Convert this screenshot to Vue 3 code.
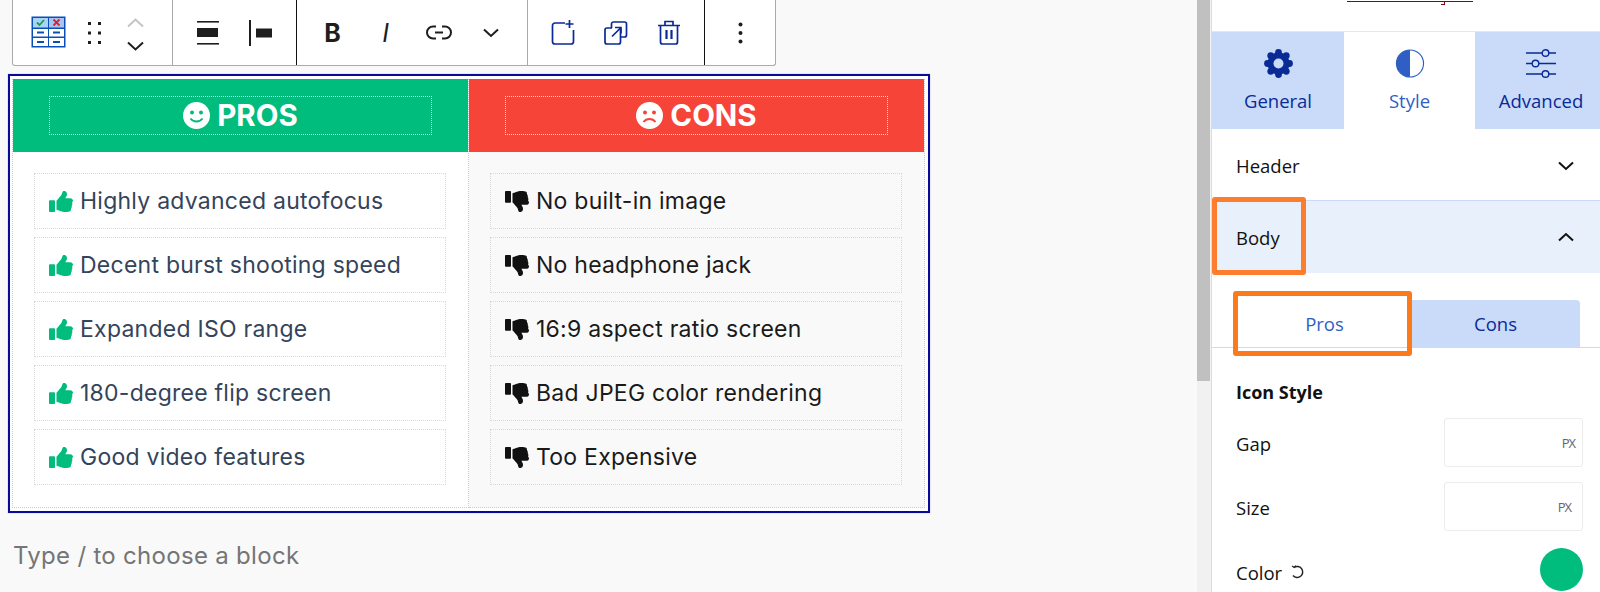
<script setup>
const thumb = "M104 224H24c-13.255 0-24 10.745-24 24v240c0 13.255 10.745 24 24 24h80c13.255 0 24-10.745 24-24V248c0-13.255-10.745-24-24-24zM384 81.452c0 42.416-25.97 66.208-33.277 94.548h101.723c33.397 0 59.397 27.746 59.553 58.098.084 17.938-7.546 37.249-19.439 49.197l-.11.11c9.836 23.337 8.237 56.037-9.308 79.469 8.681 25.895-.069 57.704-16.382 74.757 4.298 17.598 2.244 32.575-6.148 44.632C440.202 511.587 389.616 512 346.839 512l-2.845-.001c-48.287-.017-87.806-17.598-119.56-31.725-15.957-7.099-36.821-15.887-52.651-16.178-6.54-.12-11.783-5.457-11.783-11.998v-213.77c0-3.2 1.282-6.271 3.558-8.521 39.614-39.144 56.648-80.587 89.117-113.111 14.804-14.832 20.188-37.236 25.393-58.902C282.515 39.293 291.817 0 312 0c24 0 72 8 72 81.452z"
const pros = ['Highly advanced autofocus', 'Decent burst shooting speed', 'Expanded ISO range', '180-degree flip screen', 'Good video features']
const cons = ['No built-in image', 'No headphone jack', '16:9 aspect ratio screen', 'Bad JPEG color rendering', 'Too Expensive']
const gearBumps = [0, 45, 90, 135, 180, 225, 270, 315].map((a) => ({
  a,
  x: 14.5 + 11 * Math.cos((a - 90) * Math.PI / 180),
  y: 14.5 + 11 * Math.sin((a - 90) * Math.PI / 180),
}))
</script>

<template>
  <div class="page">
    <main class="editor">
      <div class="toolbar">
        <div class="group g1">
          <svg class="logo" width="35" height="32" viewBox="0 0 35 32">
            <rect x="0.5" y="0.5" width="34" height="31" fill="#0a4fb5" />
            <rect x="2" y="2" width="15" height="9.5" fill="#a9d3f7" />
            <rect x="18" y="2" width="15" height="9.5" fill="#a9c4f0" />
            <rect x="2" y="13" width="15" height="7.5" fill="#fff" />
            <rect x="18" y="13" width="15" height="7.5" fill="#fff" />
            <rect x="2" y="22" width="15" height="8" fill="#fff" />
            <rect x="18" y="22" width="15" height="8" fill="#fff" />
            <path d="M6 6.500l2.500 2.500 4.500-5" fill="none" stroke="#1c9a55" stroke-width="1.800" />
            <path d="M22.500 3.500l6 6M28.500 3.500l-6 6" fill="none" stroke="#e0202c" stroke-width="1.800" />
            <path d="M6 16.500h7M22 16.500h7M6 26h7M22 26h7" stroke="#0a4fb5" stroke-width="2" />
          </svg>
          <svg class="drag" width="13" height="22" viewBox="0 0 13 22" fill="#1e1e1e">
            <rect x="0" y="0" width="3" height="3" /><rect x="10" y="0" width="3" height="3" />
            <rect x="0" y="9.500" width="3" height="3" /><rect x="10" y="9.500" width="3" height="3" />
            <rect x="0" y="19" width="3" height="3" /><rect x="10" y="19" width="3" height="3" />
          </svg>
          <svg class="mover" width="17" height="33" viewBox="0 0 17 33" fill="none" stroke-width="2">
            <path d="M1 8.500l7.500-7 7.500 7" stroke="#c4c4c4" />
            <path d="M1 24.500l7.500 7 7.500-7" stroke="#1e1e1e" />
          </svg>
        </div>
        <div class="group g2">
          <div class="cell">
            <svg width="22" height="26" viewBox="0 0 22 26" fill="#1e1e1e">
              <rect y="1" width="22" height="1.600" /><rect y="8" width="21" height="9" /><rect y="23" width="22" height="1.600" />
            </svg>
          </div>
          <div class="cell">
            <svg width="24" height="26" viewBox="0 0 24 26" fill="#1e1e1e">
              <rect y="0" width="2" height="26" /><rect x="7" y="8.500" width="16" height="9" />
            </svg>
          </div>
        </div>
        <div class="group g3">
          <div class="cell fmt-b">B</div>
          <div class="cell fmt-i">I</div>
          <div class="cell">
            <svg width="26" height="15" viewBox="0 0 26 15" fill="none" stroke="#1e1e1e" stroke-width="2">
              <path d="M10 1.500H7a6 6 0 0 0 0 12h3M16 1.500h3a6 6 0 0 1 0 12h-3M9 7.500h8" />
            </svg>
          </div>
          <div class="cell chev">
            <svg width="16" height="10" viewBox="0 0 16 10" fill="none" stroke="#1e1e1e" stroke-width="2">
              <path d="M1 1.500l7 6.500 7-6.500" />
            </svg>
          </div>
        </div>
        <div class="group g4">
          <div class="cell">
            <svg width="24" height="25" viewBox="0 0 24 25" fill="none" stroke="#0a2a96" stroke-width="1.700">
              <path d="M14 3H4a2.500 2.500 0 0 0-2.500 2.500v16A2.500 2.500 0 0 0 4 24h16a2.500 2.500 0 0 0 2.500-2.500V10M18.500 0v8M14.500 4h8" />
            </svg>
          </div>
          <div class="cell">
            <svg width="24" height="24" viewBox="0 0 24 24" fill="none" stroke="#0a2a96" stroke-width="1.700">
              <path d="M7.500 7V3a2 2 0 0 1 2-2h11a2 2 0 0 1 2 2v11a2 2 0 0 1-2 2h-3.500" />
              <path d="M16.500 8v13a2 2 0 0 1-2 2H3a2 2 0 0 1-2-2V9a2 2 0 0 1 2-2h5" />
              <path d="M8 15.500l8.500-8.500M11 6.500h6v6" />
            </svg>
          </div>
          <div class="cell">
            <svg width="24" height="25" viewBox="0 0 24 25" fill="none" stroke="#0a2a96" stroke-width="1.700">
              <path d="M1 5.500h22M8 5V1.500h8V5" />
              <path d="M3.500 6v16a2 2 0 0 0 2 2h13a2 2 0 0 0 2-2V6" />
              <path d="M9.500 10v9M14.500 10v9" stroke-width="2.200" />
            </svg>
          </div>
        </div>
        <div class="group g5">
          <svg width="5" height="22" viewBox="0 0 5 22" fill="#1e1e1e">
            <circle cx="2.500" cy="2.500" r="2" /><circle cx="2.500" cy="11" r="2" /><circle cx="2.500" cy="19.500" r="2" />
          </svg>
        </div>
      </div>

      <section class="block">
        <div class="col left">
          <header class="head green">
            <div class="head-box">
              <svg class="face" width="27" height="27" viewBox="0 0 27 27">
                <circle cx="13.500" cy="13.500" r="13.500" fill="#fff" />
                <circle cx="9" cy="10.500" r="2" fill="#00bc7d" /><circle cx="18" cy="10.500" r="2" fill="#00bc7d" />
                <path d="M7.500 16.500c3 4 9 4 12 0" fill="none" stroke="#00bc7d" stroke-width="2" />
              </svg>
              <span>PROS</span>
            </div>
          </header>
          <ul class="list">
            <li v-for="p in pros" :key="p" class="item">
              <svg class="thumb" width="24" height="21" viewBox="0 0 512 512" preserveAspectRatio="none" fill="#00bc7d"><path :d="thumb" /></svg>
              <span class="txt">{{ p }}</span>
            </li>
          </ul>
        </div>
        <div class="col right">
          <header class="head red">
            <div class="head-box">
              <svg class="face" width="27" height="27" viewBox="0 0 27 27">
                <circle cx="13.500" cy="13.500" r="13.500" fill="#fff" />
                <circle cx="9" cy="10.500" r="2" fill="#f74438" /><circle cx="18" cy="10.500" r="2" fill="#f74438" />
                <path d="M7.500 20c3-4 9-4 12 0" fill="none" stroke="#f74438" stroke-width="2" />
              </svg>
              <span>CONS</span>
            </div>
          </header>
          <ul class="list">
            <li v-for="c in cons" :key="c" class="item dark">
              <svg class="thumb" width="24" height="21" viewBox="0 0 512 512" preserveAspectRatio="none" fill="#111"><path :d="thumb" transform="matrix(1 0 0 -1 0 512)" /></svg>
              <span class="txt">{{ c }}</span>
            </li>
          </ul>
        </div>
      </section>

      <p class="placeholder">Type / to choose a block</p>
    </main>

    <div class="track"><div class="thumb-bar"></div></div>

    <aside class="side">
      <div class="top-link"></div>
      <nav class="tabs">
        <div class="tab">
          <svg width="29" height="29" viewBox="0 0 29 29">
            <circle v-for="b in gearBumps" :key="b.a" :cx="b.x" :cy="b.y" r="3.400" fill="#0a2a96" />
            <circle cx="14.500" cy="14.500" r="11" fill="#0a2a96" />
            <circle cx="14.500" cy="14.500" r="5" fill="#c9dbf8" />
          </svg>
          <span>General</span>
        </div>
        <div class="tab active">
          <svg width="30" height="29" viewBox="0 0 30 30">
            <circle cx="15" cy="15" r="14" fill="#fff" stroke="#2f5fc4" stroke-width="1.200" />
            <path d="M15 1a14 14 0 0 0 0 28z" fill="#2f5fc4" />
          </svg>
          <span>Style</span>
        </div>
        <div class="tab">
          <svg width="30" height="29" viewBox="0 0 30 29" fill="none" stroke="#0a2a96" stroke-width="1.400">
            <path d="M0 4h16M23 4h7M0 14.500h6M13 14.500h17M0 25h16M23 25h7" />
            <circle cx="19.500" cy="4" r="3.300" /><circle cx="9.500" cy="14.500" r="3.300" /><circle cx="19.500" cy="25" r="3.300" />
          </svg>
          <span>Advanced</span>
        </div>
      </nav>

      <div class="acc first">
        <span>Header</span>
        <svg width="16" height="10" viewBox="0 0 16 10" fill="none" stroke="#111" stroke-width="2"><path d="M1 1.500l7 6.500 7-6.500" /></svg>
      </div>
      <div class="acc open">
        <span>Body</span>
        <svg width="16" height="10" viewBox="0 0 16 10" fill="none" stroke="#111" stroke-width="2"><path d="M1 8.500l7-6.500 7 6.500" /></svg>
      </div>

      <div class="subtabs">
        <div class="sub on">Pros</div>
        <div class="sub">Cons</div>
      </div>

      <div class="form">
        <h4>Icon Style</h4>
        <div class="row">
          <label>Gap</label>
          <div class="field"><em>PX</em></div>
        </div>
        <div class="row">
          <label>Size</label>
          <div class="field second"><em>PX</em></div>
        </div>
        <div class="row color">
          <label>Color
            <svg width="14" height="14" viewBox="0 0 14 14" fill="none" stroke="#222" stroke-width="1.500"><path d="M3 2.500a5.500 5.500 0 1 1-1 8" /><path d="M1 1l2.200 1.500L4.700 .5" stroke-width="1.200" /></svg>
          </label>
          <span class="swatch"></span>
        </div>
      </div>

      <div class="hl hl-body"></div>
      <div class="hl hl-pros"></div>
    </aside>
  </div>
</template>

<style>
html, body { margin: 0; background: #f9f9f9; }
</style>

<style scoped>
.page {
  width: 1600px;
  height: 592px;
  display: flex;
  overflow: hidden;
  background: #f9f9f9;
  font-family: "Inter", "Liberation Sans", sans-serif;
}
.editor { width: 1197px; flex: none; }

.toolbar {
  margin-left: 12px;
  width: 764px;
  height: 66px;
  display: flex;
  box-sizing: border-box;
  background: #fff;
  border: 1px solid #aaa;
  border-top: 0;
  border-radius: 0 0 3px 3px;
}
.group { display: flex; align-items: center; height: 100%; box-sizing: border-box; }
.cell { width: 53px; flex: none; display: flex; align-items: center; justify-content: center; }
.chev { padding-right: 2px; box-sizing: border-box; }
.g1 { width: 160px; padding: 0 28px 0 18px; justify-content: space-between; border-right: 1px solid #aaa; }
.g2 { width: 124px; padding-left: 8px; border-right: 1px solid #111; }
.g3 { width: 231px; padding-left: 9px; border-right: 1px solid #aaa; }
.g4 { width: 177px; padding-left: 8px; border-right: 1px solid #111; }
.g5 { flex: 1; justify-content: center; }
.logo { margin-top: -1px; }
.drag { margin-left: -5px; }
.mover { margin-top: 3px; }
.fmt-b { font-size: 25px; font-weight: 700; color: #1e1e1e; }
.fmt-i { font-size: 25px; font-style: italic; color: #1e1e1e; }

.block {
  margin: 8px 0 0 8px;
  width: 922px;
  height: 439px;
  box-sizing: border-box;
  display: flex;
  background: #fff;
  border: 2px solid #0a0a9a;
  box-shadow: 0 0 1px #8f95c8;
  padding: 3px 3px 3px 2px;
}
.col { min-width: 0; display: flex; flex-direction: column; box-sizing: border-box; }
.left { width: 457px; flex: none; border-right: 1px dotted #ccc; border-left: 1px dotted #ccc; border-bottom: 1px dotted #ccc; background: #fff; }
.right { flex: 1; background: #f9f9f9; border-right: 1px dotted #ccc; border-bottom: 1px dotted #ccc; }
.head { height: 73px; flex: none; display: flex; align-items: center; justify-content: center; color: #fff; box-sizing: border-box; }
.green { background: #00bc7d; }
.red { background: #f74438; }
.head-box {
  width: 383px;
  height: 39px;
  box-sizing: border-box;
  border: 1px dotted rgba(255, 255, 255, 0.75);
  display: flex;
  align-items: center;
  justify-content: center;
  gap: 7px;
  font-size: 29.500px;
  font-weight: 700;
}
.head-box span { margin-top: -2px; }
.list { list-style: none; margin: 0; padding: 21px 22px 0 21px; display: flex; flex-direction: column; gap: 8px; }
.item {
  height: 56px;
  box-sizing: border-box;
  border: 1px dotted #d8d8d8;
  display: flex;
  align-items: center;
  padding-left: 14px;
  gap: 7px;
  font-size: 23px;
  letter-spacing: 0.25px;
  color: #34445a;
}
.item.dark { color: #1a1a1a; }
.thumb { flex: none; }
.txt { white-space: nowrap; }
.placeholder { margin: 28px 0 0 13px; font-size: 24px; line-height: 30px; letter-spacing: 0.3px; color: #757575; }

.track { width: 14px; flex: none; background: #f1f1f1; }
.thumb-bar { height: 381px; width: 13px; background: #c0c0c0; }

.side {
  position: relative;
  flex: 1;
  min-width: 0;
  background: #fff;
  border-left: 1px solid #ddd;
  box-sizing: border-box;
  font-family: "Open Sans", "Noto Sans", sans-serif;
  font-size: 18.500px;
  color: #111;
}
.top-link { position: relative; width: 126px; height: 1px; margin: 1px 0 0 135px; background: #7a0a0a; }
.top-link::after {
  content: "";
  position: absolute;
  left: 94px;
  top: 1px;
  width: 3px;
  height: 2px;
  border-right: 1px solid #7a0a0a;
  border-bottom: 1px solid #7a0a0a;
}
.tabs { display: flex; height: 98px; margin-top: 29px; background: #c9dbf8; color: #0a2a96; box-sizing: border-box; border-top: 1px solid #dde8fb; overflow: hidden; }
.tab { width: 132px; flex: none; display: flex; flex-direction: column; align-items: center; padding-top: 17px; gap: 10px; line-height: 25px; box-sizing: border-box; }
.tab.active { width: 131px; background: #fff; color: #2f5fc4; }
.acc { height: 71px; display: flex; align-items: center; justify-content: space-between; padding: 0 26px 0 24px; box-sizing: border-box; }
.acc.first { padding-top: 2px; }
.acc.open { height: 73px; background: #e8f0fb; border-top: 1px solid #c9dbf8; }
.subtabs { display: flex; height: 75px; padding: 27px 0 0 26px; border-bottom: 1px solid #c9dbf8; box-sizing: border-box; }
.sub { width: 173px; height: 47px; display: flex; align-items: center; justify-content: center; background: #c9dbf8; color: #0a2a96; border-radius: 0 4px 0 0; box-sizing: border-box; }
.sub.on { background: #fff; color: #2f5fc4; border-radius: 0; }
.sub + .sub { width: 169px; }
.form { padding: 33px 17px 0 24px; }
h4 { margin: 0 0 1px; font-size: 18px; line-height: 22px; font-weight: 700; }
.row { display: flex; align-items: center; justify-content: space-between; height: 49px; margin-top: 15px; }
.row label { display: flex; align-items: center; gap: 9px; padding-top: 1px; }
.field { width: 139px; height: 49px; box-sizing: border-box; border: 1px solid #ececec; border-radius: 3px; display: flex; align-items: center; justify-content: flex-end; padding-right: 7px; }
.field.second { padding-right: 11px; }
.field em { font-style: normal; font-size: 13px; letter-spacing: -1px; color: #666; }
.row.color { margin-top: 17px; height: 43px; }
.row.color label { padding-top: 5px; }
.swatch { width: 43px; height: 43px; border-radius: 50%; background: #00bc7d; }
.hl { position: absolute; box-sizing: border-box; border: 5px solid #fb7d2d; border-radius: 3px; pointer-events: none; }
.hl-body { left: 0; top: 197px; width: 94px; height: 78px; }
.hl-pros { left: 21px; top: 291px; width: 179px; height: 65px; border-color: #fd7a1b; }
</style>
